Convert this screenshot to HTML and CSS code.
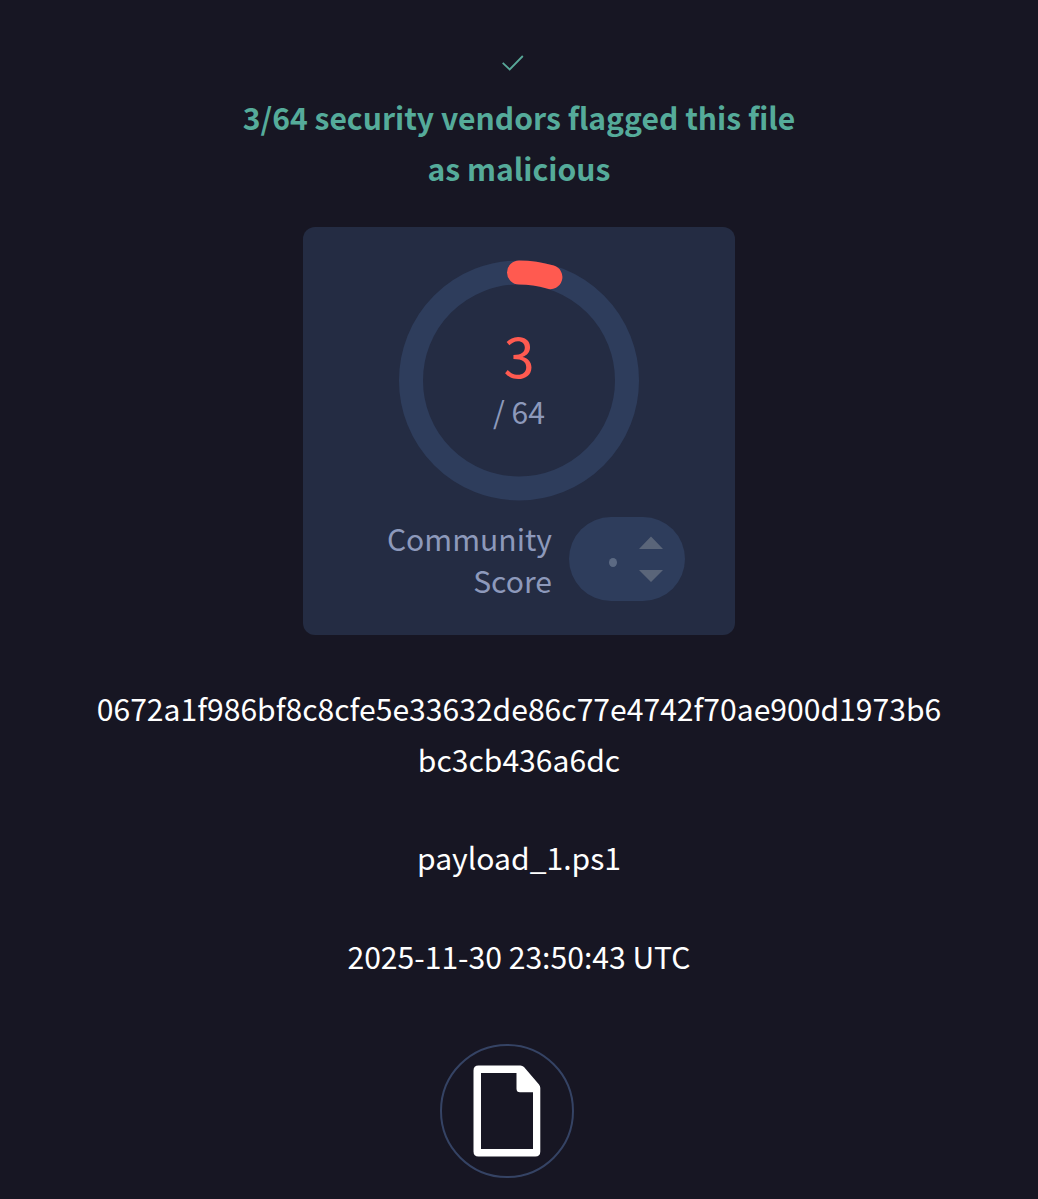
FILE: index.html
```html
<!DOCTYPE html>
<html lang="en">
<head>
<meta charset="utf-8">
<title>File report</title>
<link rel="stylesheet" href="styles.css">
</head>
<body>
<main class="report">
  <svg class="check" viewBox="0 0 24 18" aria-hidden="true"><path d="M1.700 8.900 8.700 15.500 21.800 2"/></svg>
  <h1 class="verdict">3/64 security vendors flagged this file<br>as malicious</h1>
  <section class="card">
    <div class="gauge">
      <svg class="ring" viewBox="0 0 240 240" aria-hidden="true">
        <circle class="track" cx="120" cy="120.400" r="108"/>
        <path class="value" d="M120 12.400A108 108 0 0 1 151.4 17.100"/>
      </svg>
      <div class="reading">
        <div class="positives">3</div>
        <div class="total">/ 64</div>
      </div>
    </div>
    <div class="community">
      <div class="label">Community<br>Score</div>
      <div class="pill">
        <span class="dot"></span>
        <svg class="arrows" viewBox="0 0 24 46" aria-hidden="true"><path d="M0 13 12 .500 24 13zM0 34H24L12 46z"/></svg>
      </div>
    </div>
  </section>
  <p class="detail hash">0672a1f986bf8c8cfe5e33632de86c77e4742f70ae900d1973b6<br>bc3cb436a6dc</p>
  <p class="detail name">payload_1.ps1</p>
  <p class="detail date">2025-11-30 23:50:43 UTC</p>
  <div class="file-badge">
    <svg class="file" viewBox="0 0 68 92" aria-hidden="true"><path fill-rule="evenodd" d="M5.500 .500H47.500Q49.500 .500 51 2L66 19.500Q67.300 21 67.300 23V86.500Q67.300 91.500 62.300 91.500H5.500Q.500 91.500 .500 86.500V5.500Q.500 .500 5.500 .500ZM8 8V84H60V27.300H47Q43.500 27.300 43.500 23.800V8Z"/></svg>
  </div>
</main>
</body>
</html>
```
FILE: styles.css
```css
* { box-sizing: border-box; }
body {
  margin: 0;
  min-height: 1199px;
  background: #171623;
  color: #fff;
  font: 400 30.1px/51px "Noto Sans CJK SC", "Noto Sans", sans-serif;
}
.report {
  display: flex;
  flex-direction: column;
  align-items: center;
  padding-top: 54px;
  text-align: center;
}
.check {
  width: 24px;
  height: 18px;
  margin-right: 13px;
  fill: none;
  stroke: #58a899;
  stroke-width: 1.8;
}
.verdict {
  margin: 20px 0 33px;
  color: #55ab9a;
  font: inherit;
  font-weight: 700;
}
.card {
  width: 432px;
  height: 408px;
  padding: 33px 50px 0;
  border-radius: 12px;
  background: #242c43;
  color: #8d99bb;
}
.gauge {
  display: grid;
  place-items: center;
  width: 240px;
  height: 240px;
  margin: 0 auto;
}
.ring, .reading { grid-area: 1 / 1; }
.ring { width: 240px; height: 240px; overflow: visible; }
.reading { padding-top: 4px; }
.track { fill: none; stroke: #2e3d5c; stroke-width: 24; }
.value { fill: none; stroke: #ff5a50; stroke-width: 24; stroke-linecap: round; }
.positives {
  color: #ff5a50;
  font-size: 56px;
  line-height: 57px;
}
.total { line-height: 58px; }
.community {
  display: flex;
  justify-content: flex-end;
  align-items: center;
  gap: 17px;
  height: 84px;
  margin-top: 17px;
}
.label {
  line-height: 42px;
  text-align: right;
}
.pill {
  display: flex;
  justify-content: flex-end;
  align-items: center;
  gap: 22px;
  width: 116px;
  height: 84px;
  padding-right: 22px;
  border-radius: 42px;
  background: #2e3d5c;
}
.dot {
  width: 8px;
  height: 9px;
  margin-top: 6px;
  border-radius: 50%;
  background: #5c6a83;
}
.arrows { width: 24px; height: 46px; fill: #5a6579; }
.detail { margin: 0 0 47px; }
.hash { margin-top: 48px; }
.name { margin-bottom: 48px; }
.file-badge {
  display: grid;
  place-items: center;
  width: 134px;
  height: 134px;
  margin: 15px 24px 0 0;
  border: 2px solid #354364;
  border-radius: 50%;
}
.file { width: 68px; height: 92px; fill: #fff; }
```
